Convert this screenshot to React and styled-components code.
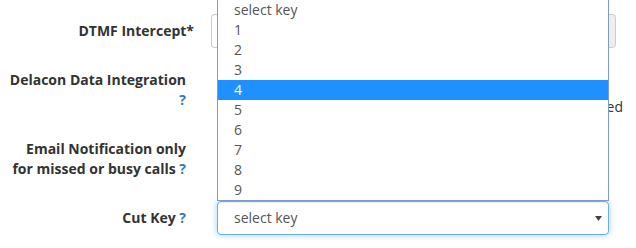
import React from "react";
import styled, { createGlobalStyle } from "styled-components";

const Global = createGlobalStyle`
  html, body { margin: 0; padding: 0; background: #fff; overflow: hidden; }
  body {
    font-family: "Open Sans", "Noto Sans", "Liberation Sans", sans-serif;
    font-size: 14px;
    line-height: 20px;
    color: #333;
  }
`;

const Form = styled.form`
  width: 636px;
  height: 248px;
  padding-top: 14px;
  box-sizing: border-box;
  display: flex;
  flex-direction: column;
`;

const Row = styled.div`
  display: grid;
  grid-template-columns: 186px 392px;
  column-gap: 31px;
  height: ${(p) => p.$h}px;
  margin-bottom: ${(p) => (p.$last ? 0 : 15)}px;
`;

const Label = styled.label`
  font-weight: 700;
  text-align: right;
  padding-top: 7px;
  color: #333;
  white-space: nowrap;
`;

const Star = styled.span`
  margin-right: -8px;
`;

const Help = styled.span`
  color: #337ab7;
  font-weight: 700;
`;

const Control = styled.div`
  position: relative;
  min-width: 0;
`;

const InputGroup = styled.div`
  display: flex;
  height: 34px;
  margin: 0 -7px 0 -6px;
`;

const Input = styled.div`
  flex: 1;
  border: 1px solid #ccc;
  border-right: 0;
  border-radius: 4px 0 0 4px;
  background: #fff;
`;

const Addon = styled.div`
  width: 40px;
  border: 1px solid #ccc;
  border-radius: 0 4px 4px 0;
  background: #eee;
`;

const Note = styled.div`
  padding-top: 34px;
  margin-right: -14px;
  text-align: right;
  white-space: nowrap;
  color: #333;
`;

const Select = styled.div`
  height: 34px;
  box-sizing: border-box;
  border: 1px solid #66afe9;
  border-radius: 4px;
  box-shadow: inset 0 1px 1px rgba(0, 0, 0, 0.075), 0 0 6px rgba(102, 175, 233, 0.6);
  display: flex;
  align-items: center;
  justify-content: space-between;
  padding: 0 6px 0 16px;
  color: #555;
  background: #fff;
`;

const Popup = styled.ul`
  position: absolute;
  left: 0;
  bottom: 100%;
  width: 392px;
  box-sizing: border-box;
  margin: 0;
  padding: 0;
  list-style: none;
  background: #fff;
  border: 1px solid #7b9bd1;
  z-index: 10;
`;

const Option = styled.li`
  height: 20px;
  line-height: 20px;
  padding-left: 16px;
  color: ${(p) => (p.$active ? "#fff" : "#555")};
  background: ${(p) => (p.$active ? "#1e90ff" : "transparent")};
`;

const options = ["select key", "1", "2", "3", "4", "5", "6", "7", "8", "9"];

export default function App() {
  return (
    <>
      <Global />
      <Form>
        <Row $h={34}>
          <Label>
            DTMF Intercept<Star>*</Star>
          </Label>
          <Control>
            <InputGroup>
              <Input />
              <Addon />
            </InputGroup>
          </Control>
        </Row>
        <Row $h={54}>
          <Label>
            Delacon Data Integration
            <br />
            <Help>?</Help>
          </Label>
          <Control>
            <Note>Call data will be posted</Note>
          </Control>
        </Row>
        <Row $h={54}>
          <Label>
            Email Notification only
            <br />
            for missed or busy calls <Help>?</Help>
          </Label>
          <Control />
        </Row>
        <Row $h={34} $last>
          <Label>
            Cut Key <Help>?</Help>
          </Label>
          <Control>
            <Popup>
              {options.map((o) => (
                <Option key={o} $active={o === "4"}>
                  {o}
                </Option>
              ))}
            </Popup>
            <Select>
              <span>select key</span>
              <svg width="7" height="5" viewBox="0 0 7 5">
                <polygon points="0,0 7,0 3.5,5" fill="#444" />
              </svg>
            </Select>
          </Control>
        </Row>
      </Form>
    </>
  );
}
